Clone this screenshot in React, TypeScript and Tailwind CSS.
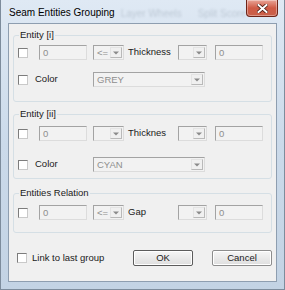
import React from 'react';

const Check = () => (
  <span className="block w-[10px] h-[10px] shrink-0 bg-white border border-t-[#7c7c7c] border-l-[#7c7c7c] border-r-[#c9c9c9] border-b-[#c9c9c9]" />
);

const Field = ({ w = 48, text = '0' }: { w?: number; text?: string }) => (
  <div
    className="h-[15px] shrink-0 bg-[#f2f2f2] border border-t-[#a3a3a3] border-l-[#a3a3a3] border-r-[#dcdcdc] border-b-[#dcdcdc] pl-[3px] text-[#8e8e8e] leading-[13px]"
    style={{ width: w }}
  >
    {text}
  </div>
);

const Arrow = () => (
  <span className="flex items-center justify-center w-[12px] h-[11px] my-auto mr-[1px] border border-t-[#e4e4e4] border-l-[#e4e4e4] border-r-[#b9b9b9] border-b-[#b9b9b9] bg-[#f0f0f0]">
    <svg width="6" height="4" viewBox="0 0 6 4">
      <path d="M0 0.5h6L3 3.5z" fill="#8a8a8a" />
    </svg>
  </span>
);

const Combo = ({ w, text = '' }: { w: number; text?: string }) => (
  <div
    className="flex h-[15px] shrink-0 bg-[#f2f2f2] border border-t-[#a3a3a3] border-l-[#a3a3a3] border-r-[#dcdcdc] border-b-[#dcdcdc]"
    style={{ width: w }}
  >
    <span className="flex-1 pl-[3px] text-[#8e8e8e] leading-[13px]">{text}</span>
    <Arrow />
  </div>
);

const Group = ({ label, className, children }: { label: string; className: string; children: React.ReactNode }) => (
  <fieldset className={`mx-[4px] border border-[#d5dfe5] rounded-[3px] ${className}`}>
    <legend className="ml-[5px] px-[1px] leading-[12px]">{label}</legend>
    {children}
  </fieldset>
);

const ThickRow = ({ label, op }: { label: string; op?: string }) => (
  <div className="flex items-center">
    <span className="ml-[4px]"><Check /></span>
    <span className="ml-[11px]"><Field /></span>
    <span className="ml-[6px]"><Combo w={31} text={op} /></span>
    <span className="ml-[4px] w-[50px]">{label}</span>
    <Combo w={29} />
    <span className="ml-[8px]"><Field /></span>
  </div>
);

const ColorRow = ({ color }: { color: string }) => (
  <div className="flex items-center">
    <span className="ml-[4px]"><Check /></span>
    <span className="ml-[7px] w-[58px]">Color</span>
    <Combo w={112} text={color} />
  </div>
);

export default function App() {
  return (
    <div className="w-[285px] h-[290px] flex flex-col whitespace-nowrap bg-linear-to-b from-[#dfe9f4] via-[#cbdaea] to-[#c3d3e4] border-l border-r border-b border-[#7d8c9c] text-[9.5px] text-[#1a1a1a] font-['Liberation_Sans',Arial,sans-serif]">
      {/* title bar */}
      <div className="h-[23px] flex items-start shrink-0">
        <span className="ml-[8px] mt-[7px] text-[10px] leading-[12px] text-black">Seam Entities Grouping</span>
        <span className="ml-[6px] mt-[8px] text-[10px] leading-[12px] text-[#5b6a7a] opacity-25 blur-[1px]">Layer Wheels</span>
        <span className="ml-[16px] mt-[8px] text-[10px] leading-[12px] text-[#5b6a7a] opacity-25 blur-[1px]">Split Score</span>
        <span className="flex-1" />
        <div className="mr-[6px] w-[37px] h-[17px] flex items-center justify-center rounded-b-[4px] border border-t-0 border-[#6e2418] bg-linear-to-b from-[#e8a497] via-[#cf5a45] to-[#c9614a] shadow-[inset_0_0_0_1px_rgba(255,255,255,0.35)]">
          <svg width="11" height="9" viewBox="0 0 11 9">
            <path d="M1.5 1l8 7M9.5 1l-8 7" stroke="#4a1a12" strokeWidth="3.6" strokeLinecap="square" />
            <path d="M1.5 1l8 7M9.5 1l-8 7" stroke="#ffffff" strokeWidth="2" strokeLinecap="square" />
          </svg>
        </div>
      </div>

      {/* client area */}
      <div className="mx-[7px] mb-[7px] flex-1 flex flex-col bg-[#f0f0f0] border border-[#8e9eb0]">
        <Group label="Entity [i]" className="mt-[5px] pt-[4px] pb-[14px]">
          <ThickRow label="Thickness" op="<=" />
          <div className="mt-[12px]"><ColorRow color="GREY" /></div>
        </Group>

        <Group label="Entity [ii]" className="mt-[6px] pt-[6px] pb-[6px]">
          <ThickRow label="Thicknes" />
          <div className="mt-[16px]"><ColorRow color="CYAN" /></div>
        </Group>

        <Group label="Entities Relation" className="mt-[8px] pt-[6px] pb-[12px]">
          <ThickRow label="Gap" op="<=" />
        </Group>

        <div className="mt-[17px] flex items-center">
          <span className="ml-[8px]"><Check /></span>
          <span className="ml-[5px]">Link to last group</span>
          <span className="flex-1" />
          <button className="w-[60px] h-[16px] border border-[#5c5c5c] rounded-[2px] bg-linear-to-b from-[#f6f6f6] to-[#dedede] shadow-[inset_0_0_0_1px_#ffffff] leading-[12px]">
            OK
          </button>
          <button className="ml-[19px] mr-[4px] w-[60px] h-[16px] border border-[#8d8d8d] rounded-[2px] bg-linear-to-b from-[#f6f6f6] to-[#dedede] shadow-[inset_0_0_0_1px_#ffffff] leading-[12px]">
            Cancel
          </button>
        </div>
      </div>
    </div>
  );
}
